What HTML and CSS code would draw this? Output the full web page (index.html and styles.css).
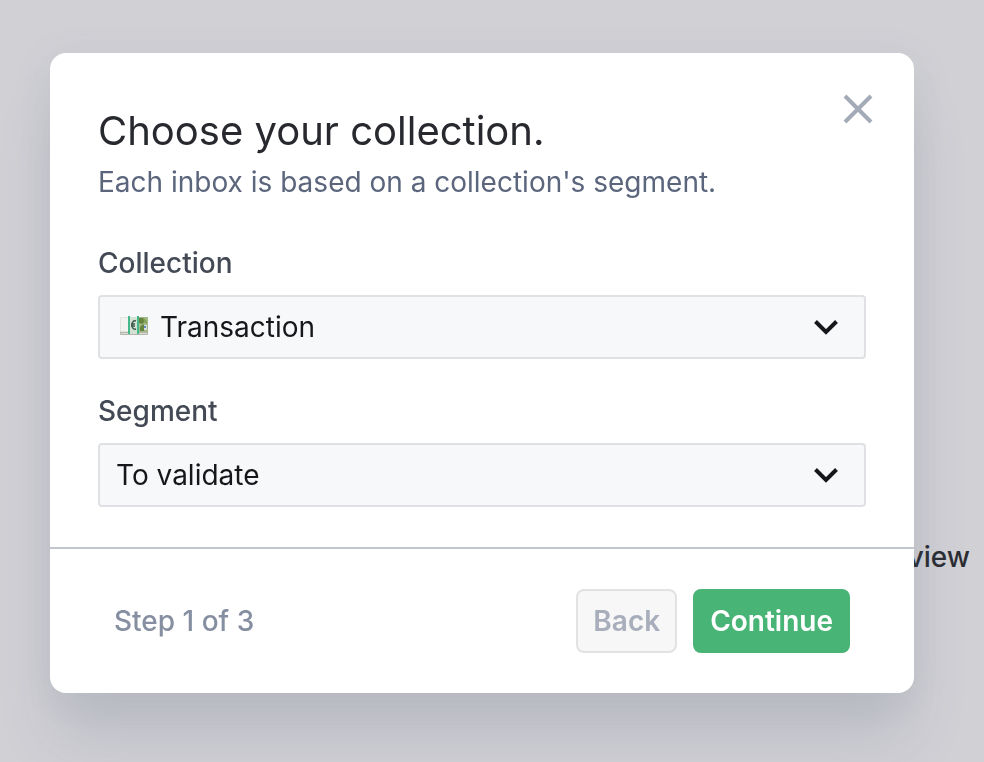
FILE: index.html
```html
<!DOCTYPE html>
<html lang="en">
<head>
  <meta charset="UTF-8" />
  <meta name="viewport" content="width=device-width, initial-scale=1.0" />
  <title>Choose your collection</title>
  <link rel="stylesheet" href="styles.css">
</head>
<body>
  <main class="page">
    <p class="page-text">view</p>
  </main>

  <div class="overlay">
    <form class="modal" role="dialog" aria-labelledby="modal-title">
      <button type="button" class="close" aria-label="Close">
        <svg width="32" height="32" viewBox="0 0 32 32" fill="none" stroke="currentColor" stroke-width="4">
          <path d="M3 3L29 29M29 3L3 29" />
        </svg>
      </button>

      <div class="modal-body">
        <h1 id="modal-title">Choose your collection.</h1>
        <p class="subtitle">Each inbox is based on a collection's segment.</p>

        <div class="field">
          <label for="collection">Collection</label>
          <div class="select-wrap">
            <svg class="money" width="28" height="20" viewBox="0 0 28 20">
              <rect x="0" y="2" width="28" height="17" rx="1" fill="#b4b5ab" />
              <path d="M1 17.500H27" stroke="#dcddd5" />
              <rect x="0" y="1" width="28" height="15" rx="1" fill="#dfe4dc" />
              <rect x="1" y="2" width="8" height="13" fill="#f1f3f1" />
              <rect x="17" y="1" width="11" height="15" fill="#a3b98a" />
              <path d="M18 2h5l3 3-4 3-3-1zM20 11l3-3 2 2-1 5h-4z" fill="#65853f" />
              <path d="M23 1l4 4v3l-3-2z" fill="#86a35c" />
              <rect x="24" y="9" width="3" height="5" fill="#d5dfdb" />
              <rect x="24" y="10" width="2" height="2" fill="#5f87c4" />
              <rect x="8" y="0" width="2" height="18" fill="#43b98b" />
              <rect x="10" y="1" width="7" height="16" fill="#d3e2d3" />
              <path d="M16 5c-3-1-4 2-4 4s1 5 4 4M11 8h4M11 10h4" fill="none" stroke="#3f5a4b" stroke-width="1.500" />
              <rect x="17" y="0" width="2" height="18" fill="#43b98b" />
            </svg>
            <select id="collection" class="with-icon">
              <option>Transaction</option>
            </select>
            <svg class="chevron" width="24" height="16" viewBox="0 0 24 16" fill="none" stroke="currentColor" stroke-width="4">
              <path d="M1.500 2.500L12 13L22.500 2.500" />
            </svg>
          </div>
        </div>

        <div class="field">
          <label for="segment">Segment</label>
          <div class="select-wrap">
            <select id="segment">
              <option>To validate</option>
            </select>
            <svg class="chevron" width="24" height="16" viewBox="0 0 24 16" fill="none" stroke="currentColor" stroke-width="4">
              <path d="M1.500 2.500L12 13L22.500 2.500" />
            </svg>
          </div>
        </div>
      </div>

      <div class="modal-footer">
        <span class="step">Step 1 of 3</span>
        <button type="button" class="btn btn-back" disabled>Back</button>
        <button type="submit" class="btn btn-continue">Continue</button>
      </div>
    </form>
  </div>
</body>
</html>
```

FILE: styles.css
```css
* {
  box-sizing: border-box;
}
body {
  margin: 0;
  min-height: 100vh;
  background-color: #d0d0d5;
  color: #2b2d33;
  font-family: Inter, "Liberation Sans", sans-serif;
  font-size: 28px;
  overflow: hidden;
}
h1, p {
  margin: 0;
}
.page {
  padding: 536px 14px 0;
}
.page-text {
  text-align: right;
  font-weight: 500;
  line-height: 42px;
}

.overlay {
  position: fixed;
  inset: 0;
  padding: 53px 70px 0 50px;
}
.modal {
  position: relative;
  background: #ffffff;
  border-radius: 16px;
  box-shadow: 0 50px 60px -6px rgba(85, 95, 120, 0.16), 0 8px 40px rgba(100, 120, 115, 0.1);
}
.close {
  position: absolute;
  top: 40px;
  right: 40px;
  display: flex;
  padding: 0;
  border: none;
  background: none;
  color: #a3abb9;
  cursor: pointer;
}
.modal-body {
  padding: 48px 48px 40px;
}
h1 {
  font-size: 40px;
  font-weight: 400;
  line-height: 60px;
  color: #27292e;
}
.subtitle {
  line-height: 42px;
  color: #5b667d;
  margin-bottom: 40px;
}

.field + .field {
  margin-top: 32px;
}
.field label {
  display: block;
  margin-bottom: 12px;
  font-weight: 500;
  line-height: 40px;
  color: #434955;
}
.select-wrap {
  position: relative;
}
select {
  display: block;
  width: 100%;
  height: 64px;
  padding: 0 64px 0 16px;
  border: 2px solid #dfe1e4;
  border-radius: 4px;
  background: #f7f8fa;
  color: #15171a;
  font: inherit;
  appearance: none;
}
select.with-icon {
  padding-left: 60px;
}
.money {
  position: absolute;
  left: 22px;
  top: 21px;
}
.chevron {
  position: absolute;
  right: 28px;
  top: 24px;
  color: #15171a;
  pointer-events: none;
}

.modal-footer {
  display: flex;
  align-items: center;
  gap: 16px;
  padding: 40px 64px;
  border-top: 2px solid #c3c7cd;
}
.step {
  flex: 1;
  color: #858fa1;
  font-weight: 500;
}
.btn {
  height: 64px;
  padding: 0 15px;
  border: 2px solid transparent;
  border-radius: 8px;
  font: inherit;
  font-weight: 600;
}
.btn-back {
  background: #f7f7f8;
  border-color: #e1e2e4;
  color: #a8aebb;
}
.btn-continue {
  background: #48b475;
  border-color: #48b475;
  color: #ffffff;
}
```
